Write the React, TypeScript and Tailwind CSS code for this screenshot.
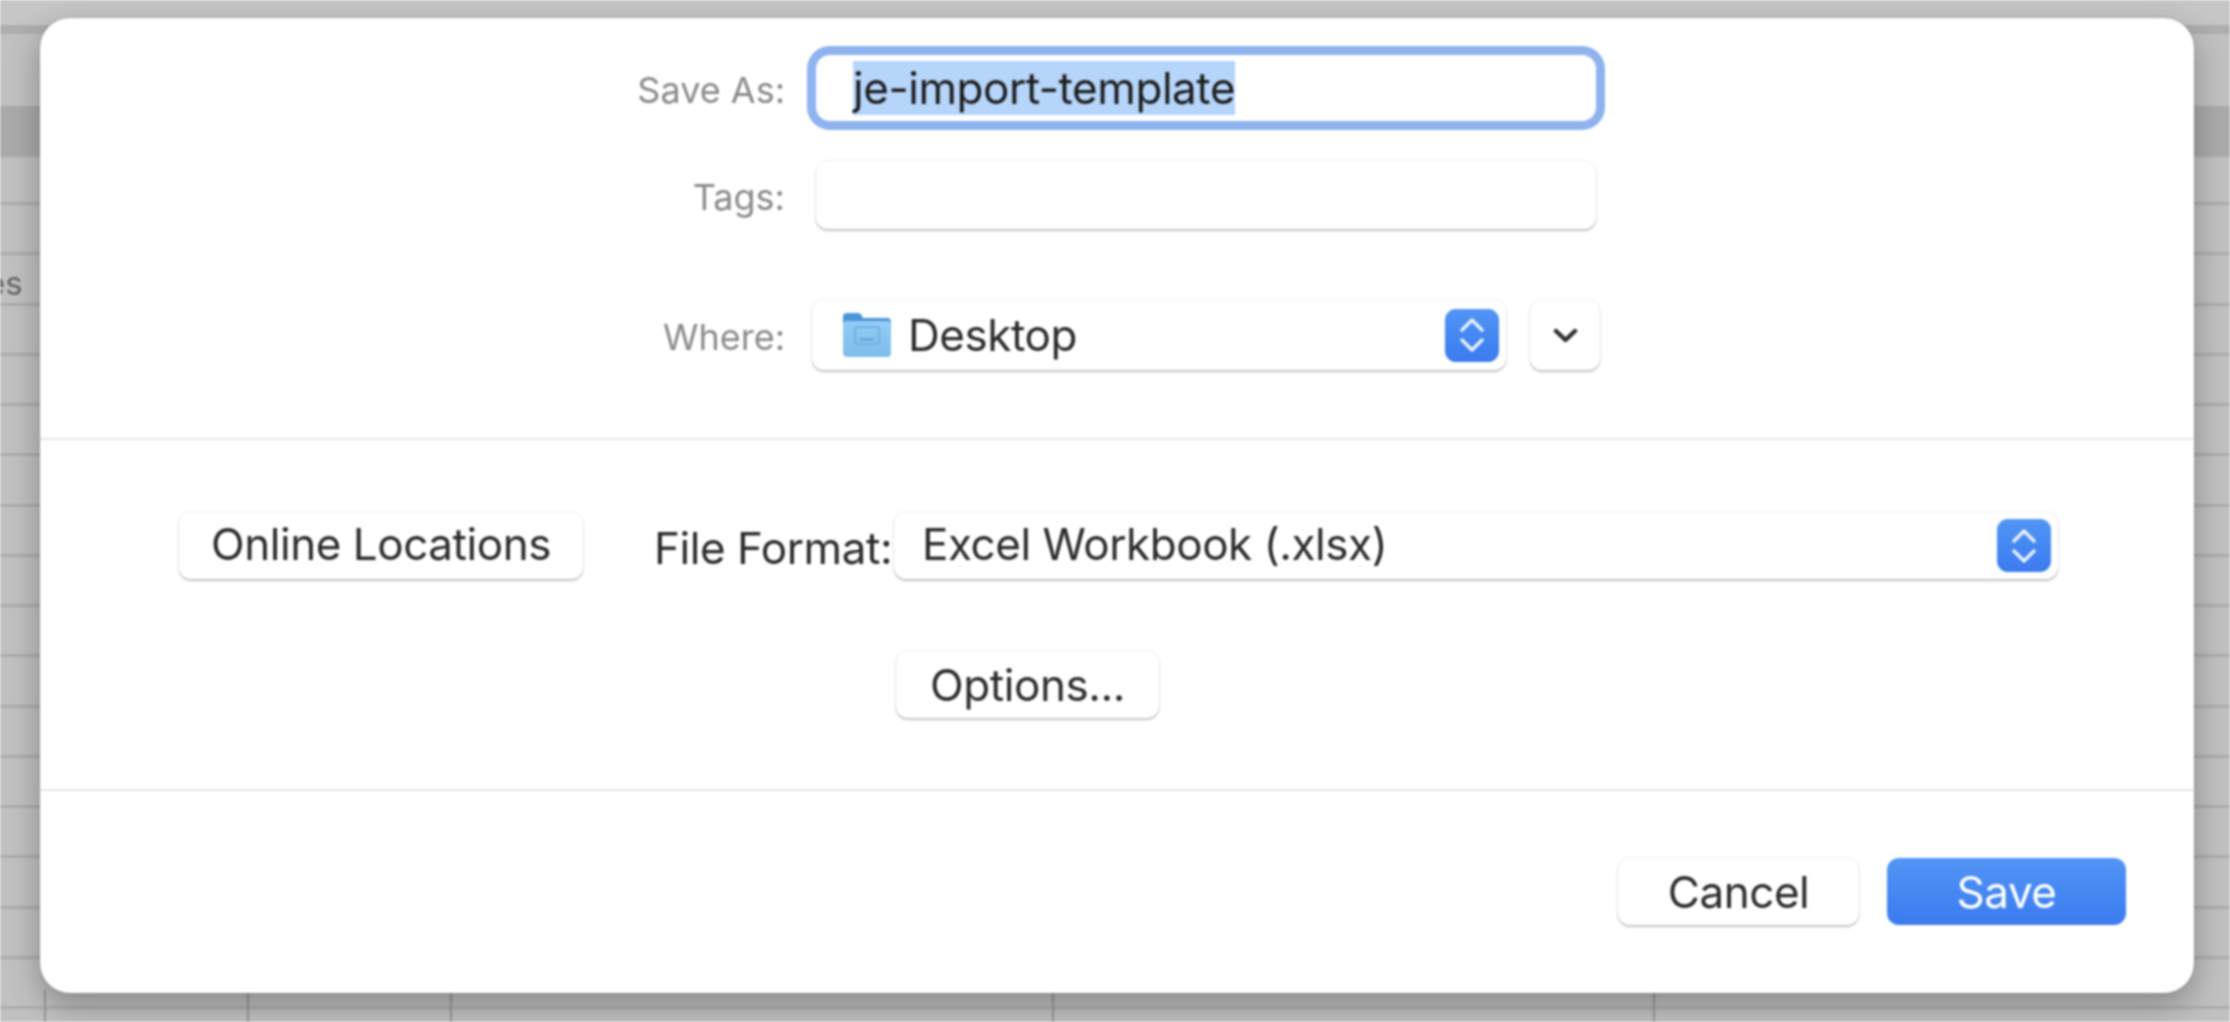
// row lines of the sheet behind the save dialog
const ROWS = [0, 1, 2, 3, 4, 5, 6, 7, 8, 9, 10, 11, 12, 13, 14, 15, 16, 17]

function Stepper() {
  return (
    <span className="flex h-[53px] w-[54px] items-center justify-center rounded-[11px] bg-gradient-to-b from-[#5295f5] to-[#3b7bf0]">
      <svg width="24" height="36" viewBox="0 0 24 36" fill="none" stroke="#eaf2fe" strokeWidth="3.4" strokeLinecap="round" strokeLinejoin="round">
        <path d="M2 13 12 3l10 10" />
        <path d="M2 23l10 10 10-10" />
      </svg>
    </span>
  )
}

function FolderIcon() {
  return (
    <svg width="50" height="46" viewBox="0 0 50 46" className="shrink-0">
      <defs>
        <linearGradient id="folderBody" x1="0" y1="0" x2="0" y2="1">
          <stop offset="0" stopColor="#93cdf6" />
          <stop offset="1" stopColor="#7dbcec" />
        </linearGradient>
      </defs>
      <path d="M1 5a4 4 0 0 1 4-4h11c2 0 3 1 4 3l1 2h24a4 4 0 0 1 4 4v4H1z" fill="#4a94d8" />
      <rect x="1" y="9" width="48" height="36" rx="4" fill="url(#folderBody)" />
      <rect x="13" y="15" width="24" height="17" rx="2" fill="none" stroke="#6caadd" strokeWidth="1.5" />
      <rect x="18" y="26" width="14" height="3" fill="#6caadd" />
    </svg>
  )
}

function PushButton({ children, className }: { children: React.ReactNode; className: string }) {
  return (
    <button className={`flex h-[67px] items-center justify-center rounded-[12px] bg-white text-[#2b2b2b] shadow-[0_0_1px_1px_rgba(0,0,0,0.05),0_2px_2px_rgba(0,0,0,0.22)] ${className}`}>
      {children}
    </button>
  )
}

function Label({ children }: { children: React.ReactNode }) {
  return <div className="w-[746px] shrink-0 pr-px pt-[3px] text-right text-[36px] tracking-normal text-[#8a8a8a]">{children}</div>
}

export default function App() {
  return (
    <div className="relative h-[1022px] w-[2230px] overflow-hidden bg-[#c1c1c1] font-['Inter',sans-serif] text-[44px] tracking-[-0.45px] blur-[0.8px]">
      {/* spreadsheet behind the dialog */}
      <div className="flex h-full flex-col">
        <div className="h-[25px] shrink-0 bg-[#c6c6c6]" />
        <div className="h-[9px] shrink-0 bg-[#aeaeae]" />
        <div className="h-[72px] shrink-0" />
        <div className="h-[51px] shrink-0 bg-[#aaaaaa]" />
        <div className="h-[48px] shrink-0 border-b-[3px] border-[#adadad]" />
        {ROWS.map((row) => (
          <div key={row} className="h-[50.25px] shrink-0 border-b-[3px] border-[#adadad]" />
        ))}
      </div>
      <div className="absolute left-0 top-[269px] flex h-[30px] items-center text-[33px] tracking-normal text-[#666666]">
        <span className="-ml-[14px]">es</span>
      </div>
      <div className="absolute bottom-0 left-0 flex h-[32px]">
        <div className="w-[46px] border-r-2 border-[#999999]" />
        <div className="w-[203px] border-r-2 border-[#999999]" />
        <div className="w-[203px] border-r-2 border-[#999999]" />
        <div className="w-[602px] border-r-2 border-[#999999]" />
        <div className="w-[601px] border-r-2 border-[#999999]" />
      </div>

      {/* save dialog */}
      <div className="absolute left-[40px] top-[18px] flex h-[975px] w-[2154px] flex-col rounded-[30px] bg-white shadow-[0_0_2px_rgba(0,0,0,0.3),0_12px_32px_rgba(0,0,0,0.3)]">
        <div className="flex h-[422px] shrink-0 flex-col border-b-2 border-[#e8e8e8] pt-[37px]">
          <div className="flex h-[66px] items-center">
            <Label>Save As:</Label>
            <div className="ml-[30px] flex h-[66px] w-[780px] items-center rounded-[14px] bg-white pl-[37px] outline-[9px] outline-[#8fb3ef]">
              <span className="bg-[#b6d5fa] leading-[54px] text-[#1c1c1c]">je-import-template</span>
            </div>
          </div>
          <div className="mt-[40px] flex h-[68px] items-center">
            <Label>Tags:</Label>
            <div className="ml-[30px] h-[68px] w-[780px] rounded-[12px] bg-white shadow-[0_0_1px_1px_rgba(0,0,0,0.05),0_2px_2px_rgba(0,0,0,0.22)]" />
          </div>
          <div className="mt-[71px] flex h-[70px] items-center">
            <Label>Where:</Label>
            <div className="ml-[26px] flex h-[70px] w-[694px] items-center rounded-[12px] bg-white pl-[30px] pr-[7px] text-[#2b2b2b] shadow-[0_0_1px_1px_rgba(0,0,0,0.05),0_2px_2px_rgba(0,0,0,0.22)]">
              <FolderIcon />
              <span className="ml-[16px] flex-1">Desktop</span>
              <Stepper />
            </div>
            <PushButton className="ml-[24px] !h-[70px] w-[70px]">
              <svg width="25" height="15" viewBox="0 0 25 15" fill="none" stroke="#2f2f2f" strokeWidth="4.4" strokeLinecap="round" strokeLinejoin="round">
                <path d="M3 3l9.5 9L22 3" />
              </svg>
            </PushButton>
          </div>
        </div>

        <div className="flex h-[351px] shrink-0 flex-col border-b-2 border-[#e8e8e8] pt-[72px]">
          <div className="flex h-[67px] items-center pl-[139px]">
            <PushButton className="w-[404px] pb-[4px]">Online Locations</PushButton>
            <span className="ml-[71px] mt-[4px] w-[240px] shrink-0 whitespace-nowrap text-[#2b2b2b]">File Format:</span>
            <div className="flex h-[67px] w-[1164px] items-center rounded-[12px] bg-white pl-[28px] pr-[7px] text-[#2b2b2b] shadow-[0_0_1px_1px_rgba(0,0,0,0.05),0_2px_2px_rgba(0,0,0,0.22)]">
              <span className="flex-1 pb-[4px]">Excel Workbook (.xlsx)</span>
              <Stepper />
            </div>
          </div>
          <div className="mt-[72px] pl-[856px]">
            <PushButton className="w-[263px]">Options...</PushButton>
          </div>
        </div>

        <div className="flex justify-end gap-[28px] pr-[68px] pt-[67px]">
          <PushButton className="w-[241px]">Cancel</PushButton>
          <button className="h-[67px] w-[239px] rounded-[12px] bg-gradient-to-b from-[#5295f5] to-[#3b7bf0] text-white">Save</button>
        </div>
      </div>
    </div>
  )
}
